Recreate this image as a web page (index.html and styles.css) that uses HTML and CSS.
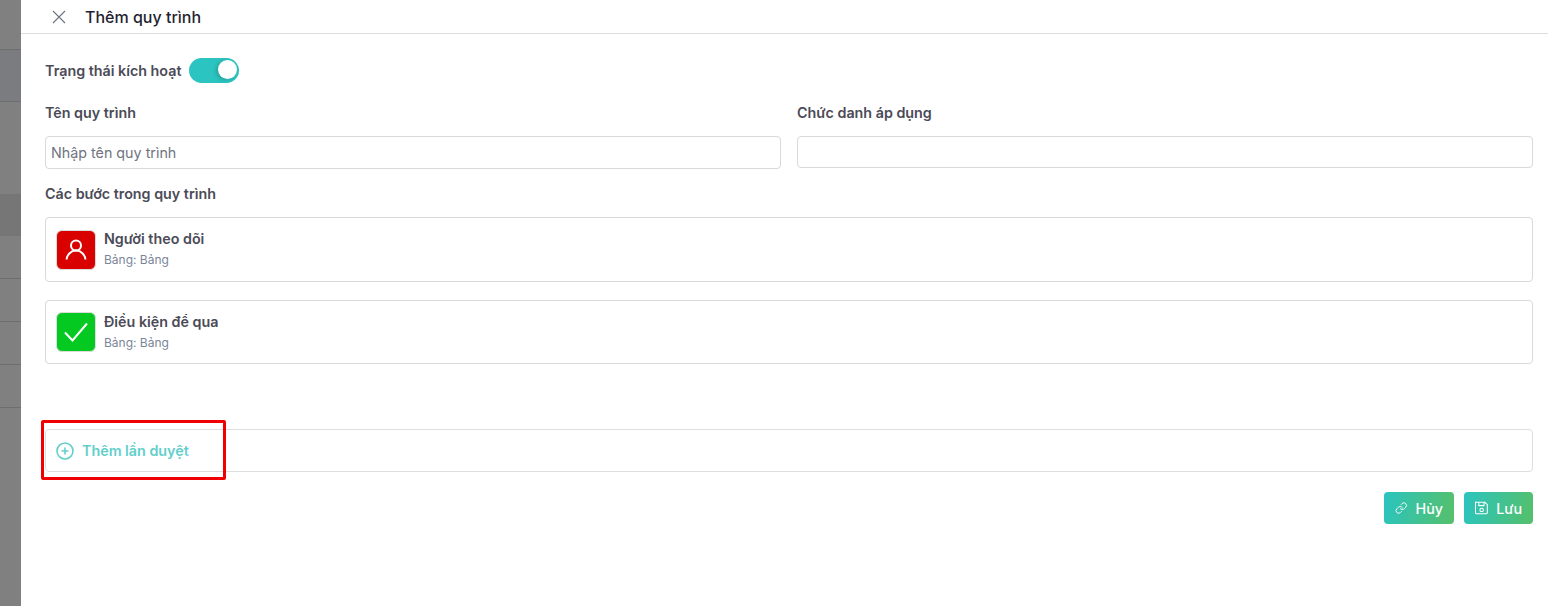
FILE: index.html
```html
<!DOCTYPE html>
<html lang="vi">
<head>
<meta charset="utf-8">
<title>Thêm quy trình</title>
<link rel="stylesheet" href="styles.css">
</head>
<body>
<div class="app">
  <aside class="backdrop">
    <div class="bd-row r1"></div>
    <div class="bd-row r2"></div>
    <div class="bd-row r3"></div>
    <div class="bd-row r4"></div>
    <div class="bd-row r5"></div>
    <div class="bd-row r6"></div>
    <div class="bd-row r6"></div>
    <div class="bd-row r6"></div>
  </aside>
  <main class="drawer">
    <header class="drawer-head">
      <svg class="close" width="14" height="14" viewBox="0 0 14 14"><path d="M1 1l12 12M13 1L1 13" stroke="#6b7280" stroke-width="1.1" fill="none"/></svg>
      <h1 class="title">Thêm quy trình</h1>
    </header>
    <div class="drawer-body">
      <div class="status-row">
        <span class="label">Trạng thái kích hoạt</span>
        <span class="switch"><span class="knob"></span></span>
      </div>
      <div class="fields">
        <div class="field">
          <label class="label">Tên quy trình</label>
          <div class="input input-tall placeholder">Nhập tên quy trình</div>
        </div>
        <div class="field">
          <label class="label">Chức danh áp dụng</label>
          <div class="input"></div>
        </div>
      </div>
      <div class="label steps-label">Các bước trong quy trình</div>
      <div class="step step-a">
        <span class="step-icon red">
          <svg width="24" height="24" viewBox="0 0 24 24" fill="none" stroke="#fff" stroke-width="2"><circle cx="12" cy="7.600" r="5"/><path d="M2.600 21.500c.5-5 4.300-8.900 9.400-8.900s8.900 3.900 9.400 8.900"/></svg>
        </span>
        <div class="step-text">
          <div class="step-name">Người theo dõi</div>
          <div class="step-sub">Bảng: Bảng</div>
        </div>
      </div>
      <div class="step step-b">
        <span class="step-icon green">
          <svg width="24" height="20" viewBox="0 0 24 20" fill="none" stroke="#fff" stroke-width="2"><path d="M1 10.500l7.500 8L23 1.500"/></svg>
        </span>
        <div class="step-text">
          <div class="step-name">Điều kiện để qua</div>
          <div class="step-sub">Bảng: Bảng</div>
        </div>
      </div>
      <div class="add-row">
        <svg width="18" height="18" viewBox="0 0 18 18" fill="none" stroke="#62cfcb" stroke-width="1.600"><circle cx="9" cy="9" r="8"/><path d="M9 5.500v7M5.500 9h7"/></svg>
        <span class="add-text">Thêm lần duyệt</span>
        <span class="highlight"></span>
      </div>
      <div class="actions">
        <button class="btn btn-cancel" type="button">
          <svg width="14" height="14" viewBox="0 0 24 24" fill="none" stroke="#fff" stroke-width="1.800" stroke-linecap="round" stroke-linejoin="round"><path d="M10 13a5 5 0 0 0 7.540.540l3-3a5 5 0 0 0-7.070-7.070l-1.720 1.710"/><path d="M14 11a5 5 0 0 0-7.540-.540l-3 3a5 5 0 0 0 7.070 7.070l1.710-1.710"/></svg>
          <span>Hủy</span>
        </button>
        <button class="btn btn-save" type="button">
          <svg width="14" height="14" viewBox="0 0 14 14" fill="none" stroke="#fff" stroke-width="1.100"><path d="M1.500 1h9l2.500 2.500v8.500a1 1 0 0 1-1 1h-10.500a1 1 0 0 1-1-1v-10.500a.5.5 0 0 1 1-.5z"/><path d="M4 1v3.500h5.500V1"/><circle cx="7" cy="9" r="1.800"/></svg>
          <span>Lưu</span>
        </button>
      </div>
    </div>
  </main>
</div>
</body>
</html>
```
FILE: styles.css
```css
* { box-sizing: border-box; }
html, body { margin: 0; padding: 0; height: 100%; overflow: hidden; }
body { font-family: Inter, "Noto Sans", sans-serif; background: #fff; color: #4b4b57; }
.app { display: flex; width: 1548px; height: 606px; }
.backdrop { width: 21px; flex: none; background: #808080; display: flex; flex-direction: column; }
.bd-row { border-bottom: 1px solid #6e6e6e; }
.r1 { height: 50px; }
.r2 { height: 52px; background: #7a7c80; }
.r3 { height: 92px; border-bottom: 0; }
.r4 { height: 42px; border-bottom: 0; background: #767676; }
.r5 { height: 43px; }
.r6 { height: 43px; }
.drawer { flex: 1; min-width: 0; display: flex; flex-direction: column; background: #fff; }
.drawer-head { height: 34px; flex: none; display: flex; align-items: center; gap: 19px; padding-left: 31px; border-bottom: 1px solid #dedede; }
.close { flex: none; }
.title { margin: 0; font-size: 16px; font-weight: 500; color: #1f2430; line-height: 20px; }
.drawer-body { padding: 24px 15px 0 24px; display: flex; flex-direction: column; }
.label { font-size: 14.300px; font-weight: 600; line-height: 18px; color: #4b4b57; display: block; }
.status-row { display: flex; align-items: center; gap: 8px; height: 25px; }
.switch { width: 50px; height: 25px; border-radius: 13px; background: #2cc4c0; position: relative; }
.knob { position: absolute; right: 2px; top: 2px; width: 19px; height: 19px; border-radius: 50%; background: #fff; box-shadow: -2px 1px 4px rgba(0, 0, 0, .18); }
.fields { display: grid; grid-template-columns: 1fr 1fr; gap: 16px; margin-top: 21px; align-items: start; }
.field .label { margin-bottom: 14px; }
.input { height: 32px; border: 1px solid #d9d9d9; border-radius: 4px; background: #fff; padding: 0 5px; font-size: 14.300px; line-height: 31px; }
.input-tall { height: 33px; }
.placeholder { color: #6f7480; }
.steps-label { margin-top: 16px; }
.step { height: 65px; border: 1px solid #d9d9d9; border-radius: 4px; display: flex; align-items: center; gap: 8px; padding-left: 10px; }
.step-a { margin-top: 14px; }
.step-b { margin-top: 18px; height: 64px; }
.step-icon { width: 40px; height: 40px; border-radius: 6px; border: 1px solid #dcdcdc; display: flex; align-items: center; justify-content: center; flex: none; }
.red { background: #d90000; }
.green { background: #04c921; }
.step-text { padding-bottom: 2px; }
.step-name { font-size: 14.300px; font-weight: 600; line-height: 18px; color: #4b4b57; }
.step-sub { font-size: 12px; line-height: 14px; margin-top: 5px; color: #7b8599; }
.add-row { position: relative; margin-top: 65px; height: 43px; border: 1px solid #dedede; border-radius: 4px; display: flex; align-items: center; gap: 8px; padding-left: 10px; }
.add-text { font-size: 14.300px; font-weight: 600; color: #62cfcb; }
.highlight { position: absolute; left: -5px; top: -10px; width: 185px; height: 60px; border: 3px solid #f00000; border-radius: 2px; }
.actions { display: flex; justify-content: flex-end; gap: 10px; margin-top: 20px; }
.btn { height: 32px; border: 0; border-radius: 4px; color: #fff; font-family: inherit; font-size: 14.300px; font-weight: 500; display: flex; align-items: center; gap: 8px; background: linear-gradient(100deg, #2bc4c0, #55c06a); padding: 0 11px; }
.btn-cancel { width: 70px; }
.btn-save { width: 69px; }
```
